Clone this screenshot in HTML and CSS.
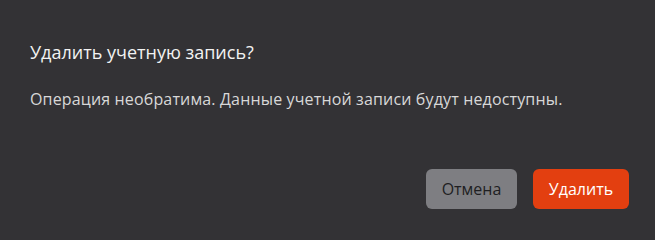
FILE: index.html
```html
<!DOCTYPE html>
<html lang="ru">
<head>
<meta charset="utf-8">
<link rel="stylesheet" href="styles.css">
</head>
<body>
<div class="dialog">
  <h2 class="title">Удалить учетную запись?</h2>
  <p class="text">Операция необратима. Данные учетной записи будут недоступны.</p>
  <div class="actions">
    <button class="btn btn-cancel">Отмена</button>
    <button class="btn btn-delete">Удалить</button>
  </div>
</div>
</body>
</html>
```
FILE: styles.css
```css
html, body {
  margin: 0;
  padding: 0;
  background: #333235;
  width: 655px;
  height: 240px;
  overflow: hidden;
}
.dialog {
  box-sizing: border-box;
  width: 655px;
  height: 240px;
  padding: 39px 26px 0 30px;
  font-family: "Open Sans", "Noto Sans", sans-serif;
  display: flex;
  flex-direction: column;
}
.title {
  margin: 0;
  font-size: 18px;
  font-weight: 400;
  line-height: 26px;
  color: #f2f2f2;
}
.text {
  margin: 23px 0 0;
  font-size: 16px;
  line-height: 22px;
  letter-spacing: 0.15px;
  color: #d8d8d8;
}
.actions {
  display: flex;
  justify-content: flex-end;
  gap: 16px;
  margin-top: 59px;
}
.btn {
  height: 40px;
  border: none;
  border-radius: 6px;
  font-family: "Open Sans", "Noto Sans", sans-serif;
  font-size: 16px;
  padding: 0;
}
.btn-cancel {
  background: #7e7e82;
  color: #1f1f22;
  width: 91px;
}
.btn-delete {
  background: #e33f10;
  color: #ffffff;
  width: 96px;
}
```
